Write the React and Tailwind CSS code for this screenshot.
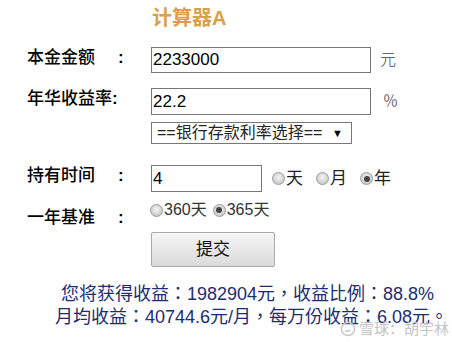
import React from 'react'

const cjk = { fontFamily: '"Liberation Sans", "Noto Sans CJK SC", sans-serif' }
const tc = { fontFamily: '"Liberation Sans", "Noto Sans CJK TC", sans-serif' }

function Radio({ checked, label, className = '' }) {
  return (
    <span className={`flex items-center ${className}`}>
      <span className="w-[13px] h-[13px] rounded-full border border-[#9a9a9a] bg-[radial-gradient(circle_at_50%_40%,#f4f4f4,#bdbdbd)] flex items-center justify-center shrink-0">
        {checked && <span className="w-[6px] h-[6px] rounded-full bg-[#444]" />}
      </span>
      <span className="ml-[1px]">{label}</span>
    </span>
  )
}

function Label({ text }) {
  return (
    <div className="flex items-center w-[151px] shrink-0 pl-[27px] pb-[6px] font-medium text-black text-[17px] leading-none">
      <span className="w-[91px] whitespace-nowrap">{text}</span>
      <span className="font-bold">:</span>
    </div>
  )
}

export default function App() {
  return (
    <div className="relative w-[452px] h-[342px] bg-white overflow-hidden pt-[4px]" style={cjk}>
      <div className="h-[28px] pl-[152px] text-[20px] leading-[28px] font-bold text-[#d9a04a]">计算器A</div>

      <div className="mt-[15px] flex items-center h-[26px]">
        <Label text="本金金额" />
        <div className="w-[220px] h-[26px] border border-[#777] flex items-center pl-[1px] text-[17px] text-black">2233000</div>
        <span className="ml-[9px] text-[16px] text-[#444] font-light">元</span>
      </div>

      <div className="mt-[15px] flex items-center h-[27px]">
        <div className="flex items-center w-[151px] shrink-0 pl-[27px] pb-[6px] font-medium text-black text-[17px] leading-none whitespace-nowrap">
          年华收益率<span className="font-bold">:</span>
        </div>
        <div className="w-[220px] h-[27px] border border-[#777] flex items-center pl-[1px] text-[17px] text-black">22.2</div>
        <span className="ml-[12px] text-[15px] text-[#666]">％</span>
      </div>

      <div className="mt-[7px] flex h-[22px] pl-[151px]">
        <div className="w-[201px] h-[22px] border border-[#777] flex items-center pl-[5px] pr-[8px] text-[16px] text-[#222] leading-none">
          <span className="flex-1 whitespace-nowrap">==银行存款利率选择==</span>
          <span className="text-[11px] text-black">▼</span>
        </div>
      </div>

      <div className="mt-[21px] flex items-center h-[27px]">
        <Label text="持有时间" />
        <div className="w-[111px] h-[27px] border border-[#777] flex items-center pl-[1px] text-[17px] text-black">4</div>
        <div className="flex items-center text-[17px] text-[#222] leading-none">
          <Radio label="天" className="ml-[10px]" />
          <Radio label="月" className="ml-[13px]" />
          <Radio label="年" checked className="ml-[13px]" />
        </div>
      </div>

      <div className="mt-[10px] flex items-start h-[22px]">
        <div className="pt-[7px]"><Label text="一年基准" /></div>
        <div className="flex items-center text-[16px] text-[#333] leading-none -ml-[1px]">
          <Radio label="360天" />
          <Radio label="365天" checked className="ml-[6px]" />
        </div>
      </div>

      <div className="mt-[8px] pl-[151px]">
        <div className="w-[124px] h-[35px] border border-[#a9a9a9] rounded-[2px] bg-gradient-to-b from-[#f6f6f6] to-[#dadada] flex items-center justify-center text-[17px] text-[#111]">
          提交
        </div>
      </div>

      <div className="mt-[16px] text-[18px] leading-[23px] text-[#1c2c70] whitespace-nowrap" style={tc}>
        <div className="pl-[61px]">您将获得收益：1982904元，收益比例：88.8%</div>
        <div className="pl-[55px]">月均收益：40744.6元/月，每万份收益：6.08元。</div>
      </div>

      <div className="absolute left-[340px] top-[318px] flex items-center gap-[3px] text-[15px] text-[#c4c4c4]">
        <svg width="16" height="16" viewBox="0 0 16 16" fill="none" stroke="#c8c8c8" strokeWidth="1.5">
          <circle cx="8" cy="8" r="6.5" />
          <path d="M5 9.5c1.2 1.2 3.6 1.2 5 -1" />
        </svg>
        <span>雪球：胡宇林</span>
      </div>
    </div>
  )
}
